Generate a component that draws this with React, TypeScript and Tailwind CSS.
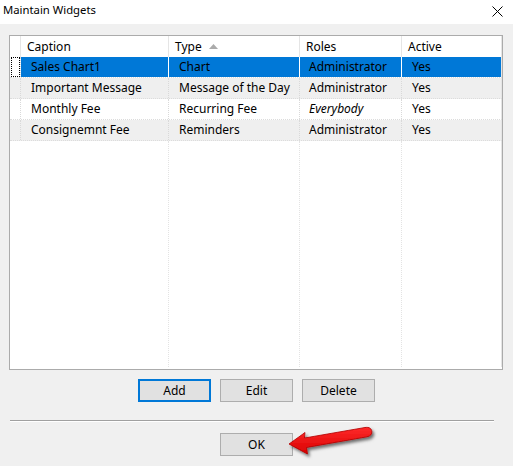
import React from 'react';

// ── Data ─────────────────────────────────────────────────────────────────────

interface WidgetRow {
  caption: string;
  type: string;
  roles: string;
  active: string;
  italicRoles?: boolean;
}

const ROWS: WidgetRow[] = [
  { caption: 'Sales Chart1', type: 'Chart', roles: 'Administrator', active: 'Yes' },
  { caption: 'Important Message', type: 'Message of the Day', roles: 'Administrator', active: 'Yes' },
  { caption: 'Monthly Fee', type: 'Recurring Fee', roles: 'Everybody', active: 'Yes', italicRoles: true },
  { caption: 'Consignemnt Fee', type: 'Reminders', roles: 'Administrator', active: 'Yes' },
];

const SELECTED = 0;

// ── Pieces ───────────────────────────────────────────────────────────────────

function HeaderCell({ label, width, sorted }: { label: string; width: string; sorted?: boolean }) {
  return (
    <div className={`${width} h-full flex items-center pl-[6px] border-r border-[#e5e5e5] shrink-0`}>
      <span>{label}</span>
      {sorted && (
        <svg width="9" height="5" viewBox="0 0 9 5" className="ml-[7px] mt-[-1px]">
          <path d="M0 5 L4.5 0 L9 5 Z" fill="#ababab" />
        </svg>
      )}
    </div>
  );
}

function GridRow({ row, index }: { row: WidgetRow; index: number }) {
  const selected = index === SELECTED;
  const striped = index % 2 === 1;
  const rowBg = selected ? 'bg-white' : striped ? 'bg-[#efefef]' : 'bg-white';
  const cellBg = selected ? 'bg-[#0078d7]' : '';
  const sep = selected ? 'border-r border-solid border-white' : 'border-r border-dotted border-[#d9d9d9]';

  return (
    <div className={`flex h-[21px] shrink-0 border-b border-dotted border-[#dcdcdc] ${rowBg}`}>
      <div className="w-[11px] h-full shrink-0 border-r border-dotted border-[#d9d9d9] pl-px">
        {selected && <div className="w-[9px] h-[20px] border border-dotted border-black" />}
      </div>
      <div className={`w-[148px] h-full shrink-0 flex items-center pl-[10px] ${cellBg} ${sep}`}>{row.caption}</div>
      <div className={`w-[131px] h-full shrink-0 flex items-center pl-[10px] ${cellBg} ${sep}`}>{row.type}</div>
      <div className={`w-[102px] h-full shrink-0 flex items-center pl-[9px] ${cellBg} ${sep} ${row.italicRoles ? 'italic' : ''}`}>
        {row.roles}
      </div>
      <div className={`w-[100px] h-full shrink-0 flex items-center pl-[10px] ${cellBg} border-r border-[#e5e5e5]`}>{row.active}</div>
    </div>
  );
}

function WinButton({ label, focused }: { label: string; focused?: boolean }) {
  return (
    <button
      className={`w-[73px] h-[23px] flex items-center justify-center bg-[#e1e1e1] text-black text-[12px] ${
        focused ? 'border-2 border-[#0078d7]' : 'border border-[#adadad]'
      }`}
    >
      {label}
    </button>
  );
}

function RedArrow() {
  return (
    <svg width="94" height="40" viewBox="0 0 94 40" className="absolute left-[284px] top-[424px]">
      <defs>
        <filter id="arrowShadow" x="-20%" y="-40%" width="140%" height="180%">
          <feDropShadow dx="2" dy="2.5" stdDeviation="1.6" floodColor="#000" floodOpacity="0.55" />
        </filter>
        <linearGradient id="arrowFill" x1="0" y1="0" x2="0" y2="1">
          <stop offset="0" stopColor="#ff2a2a" />
          <stop offset="1" stopColor="#d80000" />
        </linearGradient>
      </defs>
      <path
        d="M5 20 L21 8.5 L20.5 14 L81 3.5 C85.5 2.8 87.6 4.8 87.8 7.5 C88 10.2 86.4 12.2 83 12.8 L22.5 23.5 L23.5 30 Z"
        fill="url(#arrowFill)"
        stroke="#b00000"
        strokeWidth="0.8"
        strokeLinejoin="round"
        filter="url(#arrowShadow)"
      />
    </svg>
  );
}

// ── Dialog ───────────────────────────────────────────────────────────────────

export default function App() {
  return (
    <div className="relative w-[513px] h-[466px] bg-[#f0f0f0] overflow-hidden text-black font-['Noto_Sans','Segoe_UI',sans-serif] text-[12px]">
      {/* Title bar */}
      <div className="h-[24px] bg-white flex items-center justify-between pl-[3px] pr-[10px]">
        <span className="text-[11.3px] pb-[3px]">Maintain Widgets</span>
        <svg width="11" height="11" viewBox="0 0 11 11" className="mb-[2px]">
          <path d="M0.5 0.5 L10.5 10.5 M10.5 0.5 L0.5 10.5" stroke="#000" strokeWidth="1" />
        </svg>
      </div>

      {/* Grid */}
      <div className="ml-[9px] mt-[11px] w-[494px] h-[335px] border border-[#ababab] bg-white flex flex-col">
        <div className="flex h-[21px] shrink-0 bg-white">
          <div className="w-[11px] h-full shrink-0 border-r border-[#e5e5e5]" />
          <HeaderCell label="Caption" width="w-[148px]" />
          <HeaderCell label="Type" width="w-[131px]" sorted />
          <HeaderCell label="Roles" width="w-[102px]" />
          <HeaderCell label="Active" width="w-[100px]" />
        </div>
        {ROWS.map((row, i) => (
          <GridRow key={row.caption} row={row} index={i} />
        ))}
        {/* Empty space keeps the column lines */}
        <div className="flex flex-1 pb-[2px]">
          <div className="w-[11px] shrink-0" />
          <div className="w-[148px] shrink-0 border-r border-dotted border-[#e3e3e3]" />
          <div className="w-[131px] shrink-0 border-r border-dotted border-[#e3e3e3]" />
          <div className="w-[102px] shrink-0 border-r border-dotted border-[#e3e3e3]" />
          <div className="w-[100px] shrink-0 border-r border-[#e5e5e5]" />
        </div>
      </div>

      {/* Grid actions */}
      <div className="mt-[9px] flex justify-center gap-[9px]">
        <WinButton label="Add" focused />
        <WinButton label="Edit" />
        <WinButton label="Delete" />
      </div>

      {/* Separator */}
      <div className="ml-[10px] mt-[18px] w-[484px] h-[2px] border-t border-[#a0a0a0] border-b border-b-white" />

      {/* OK */}
      <div className="mt-[11px] flex justify-center">
        <WinButton label="OK" />
      </div>

      <RedArrow />
    </div>
  );
}
